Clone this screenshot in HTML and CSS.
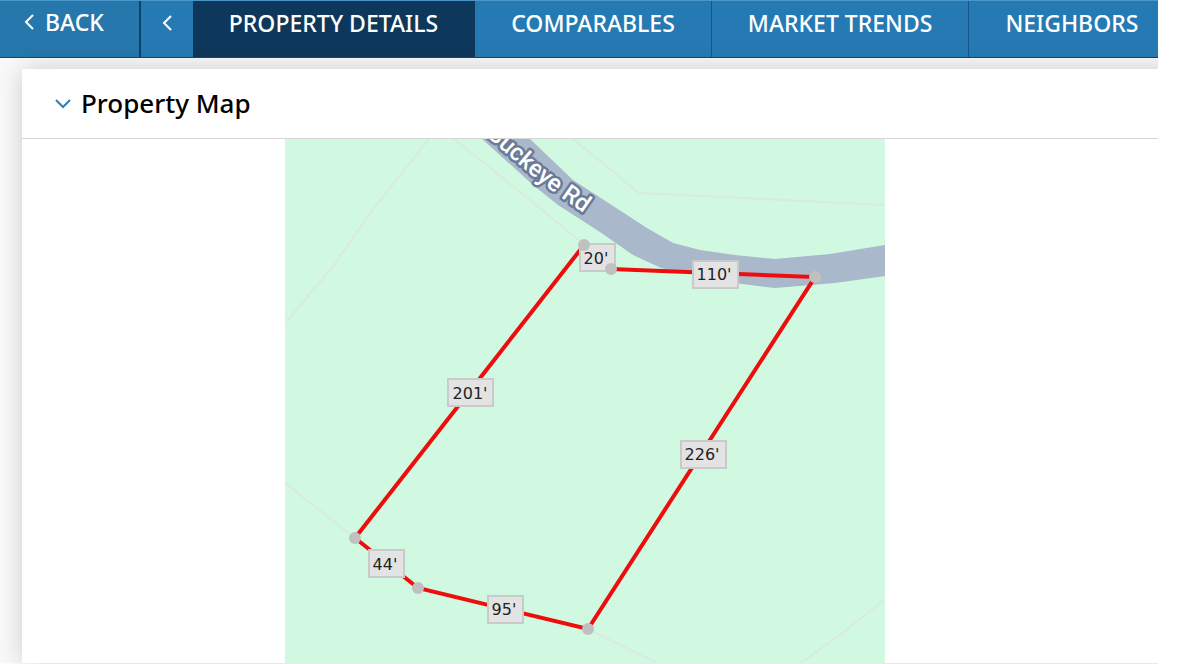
FILE: index.html
```html
<!DOCTYPE html>
<html lang="en">
<head>
    <meta charset="UTF-8">
    <meta name="viewport" content="width=device-width, initial-scale=1.0">
    <title>Property Details</title>
    <link rel="stylesheet" href="styles.css">
</head>
<body>
    <div class="app">
        <nav class="top-bar">
            <button class="back" type="button">
                <svg class="chevron" viewBox="0 0 10 16"><path d="M9 1 L2 8 L9 15"/></svg>
                BACK
            </button>
            <button class="scroll-left" type="button" aria-label="Scroll tabs left">
                <svg class="chevron" viewBox="0 0 10 16"><path d="M9 1 L2 8 L9 15"/></svg>
            </button>
            <a class="tab active" href="#details">PROPERTY DETAILS</a>
            <a class="tab" href="#comparables">COMPARABLES</a>
            <a class="tab" href="#trends">MARKET TRENDS</a>
            <a class="tab" href="#neighbors">NEIGHBORS</a>
        </nav>

        <main class="content">
            <section class="card">
                <h2 class="card-header">
                    <button class="card-toggle" type="button" aria-expanded="true">
                        <svg class="arrow" viewBox="0 0 18 12"><path d="M2 2 L9 9 L16 2"/></svg>
                        Property Map
                    </button>
                </h2>
                <div class="map">
                    <svg class="map-canvas" viewBox="0 0 600 524" preserveAspectRatio="xMidYMin slice">
                        <defs>
                            <path id="road-name" d="M201 -3 L244 34 Q272 57 330 95"/>
                        </defs>

                        <!-- neighbouring lots -->
                        <g class="lots">
                            <path d="M144 0 L82 78 L50 125 L2 182"/>
                            <path d="M169 0 L234 52 L297 104"/>
                            <path d="M288 0 L354 54 L600 66"/>
                            <path d="M0 344 L70 399"/>
                            <path d="M303 490 L372 524"/>
                            <path d="M516 524 L560 492 L600 460"/>
                        </g>

                        <!-- road -->
                        <path class="road" d="M195 -2 L243 -2 L288 41 L362 89 L388 104 L415 111 L450 116 L490 120 L545 115 L600 106 L600 137 L550 144 L490 149 L450 144 L376 129 L348 116 L315 93 L273 66 L248 46 Z"/>
                        <text class="road-label"><textPath href="#road-name">Buckeye Rd</textPath></text>

                        <!-- lot boundary -->
                        <path class="boundary" d="M326 130 L530 138 L303 490 L133 449 L70 399 L299 106"/>

                        <g class="measure">
                            <rect x="295" y="105" width="35" height="27"/>
                            <text x="311" y="125">20'</text>
                            <rect x="408" y="122" width="45" height="27"/>
                            <text x="429" y="141">110'</text>
                            <rect x="163" y="240" width="45" height="27"/>
                            <text x="185" y="260">201'</text>
                            <rect x="396" y="302" width="45" height="27"/>
                            <text x="417" y="321">226'</text>
                            <rect x="84" y="411" width="35" height="27"/>
                            <text x="100" y="431">44'</text>
                            <rect x="203" y="457" width="35" height="27"/>
                            <text x="219" y="476">95'</text>
                        </g>

                        <g class="corners">
                            <circle cx="299" cy="106" r="6"/>
                            <circle cx="326" cy="130" r="6"/>
                            <circle cx="530" cy="138" r="6"/>
                            <circle cx="303" cy="490" r="6"/>
                            <circle cx="133" cy="449" r="6"/>
                            <circle cx="70" cy="399" r="6"/>
                        </g>
                    </svg>
                </div>
            </section>
        </main>
    </div>
</body>
</html>
```

FILE: styles.css
```css
* {
    box-sizing: border-box;
}

body {
    margin: 0;
    background: #fff;
    font-family: "Noto Sans", "Open Sans", sans-serif;
}

.app {
    display: flex;
    flex-direction: column;
    height: 100vh;
    margin-right: 24px;
    padding-bottom: 1px;
    overflow: hidden;
}

.top-bar {
    display: flex;
    flex-shrink: 0;
    height: 58px;
    background: #267ab3;
    border-top: 1px solid #4b96c9;
    border-bottom: 1px solid #15486e;
    overflow: hidden;
}

.top-bar button,
.tab {
    flex-shrink: 0;
    padding: 0 36px 12px;
    border: 0;
    border-right: 1px solid #17568a;
    background: none;
    color: #fff;
    font-family: inherit;
    font-size: 23px;
    font-weight: 500;
    line-height: 44px;
    text-decoration: none;
    white-space: nowrap;
}

.top-bar .back {
    display: flex;
    align-items: center;
    gap: 11px;
    padding: 0 35px 14px 24px;
    background: #2677ab;
    border-right: 2px solid #0f4169;
}

.top-bar .scroll-left {
    display: flex;
    align-items: center;
    padding: 0 21px 12px;
    border-right: 0;
}

.tab.active {
    background: #0d385b;
    border-color: #0d385b;
}

.chevron {
    width: 10px;
    height: 16px;
    fill: none;
    stroke: #fff;
    stroke-width: 2;
}

.content {
    flex: 1;
    display: flex;
    min-height: 0;
    padding: 11px 0 0 22px;
    background: #f9f9f9;
}

.card {
    flex: 1;
    display: flex;
    flex-direction: column;
    min-width: 0;
    margin-right: -24px;
    background: #fff;
    box-shadow: 0 0 24px rgba(0, 0, 0, 0.18);
}

.card-header {
    flex-shrink: 0;
    margin: 0;
    border-bottom: 1px solid #d6d6d6;
}

.card-toggle {
    display: flex;
    align-items: center;
    gap: 9px;
    width: 100%;
    padding: 16px 32px;
    border: 0;
    background: none;
    color: #000;
    font-family: inherit;
    font-size: 26px;
    font-weight: 500;
    line-height: 37px;
}

.arrow {
    width: 18px;
    height: 12px;
    fill: none;
    stroke: #2b7fb8;
    stroke-width: 2;
}

.map {
    flex: 1;
    display: flex;
    justify-content: center;
    min-height: 0;
    padding-right: 34px;
}

.map-canvas {
    width: 600px;
    height: 100%;
    background: #d1f8e1;
}

.lots {
    fill: none;
    stroke: #d9ebdf;
    stroke-width: 2;
}

.road {
    fill: #a9b8ca;
}

.road-label {
    fill: #fff;
    stroke: #6b7a96;
    stroke-width: 5;
    stroke-linejoin: round;
    paint-order: stroke;
    font-family: Roboto, sans-serif;
    font-size: 24px;
    font-weight: 500;
}

.boundary {
    fill: none;
    stroke: #ee0c0c;
    stroke-width: 4;
}

.measure rect {
    fill: #e3e3e3;
    stroke: #c9cbca;
    stroke-width: 2;
}

.measure text {
    fill: #222;
    font-family: "DejaVu Sans", sans-serif;
    font-size: 16px;
    text-anchor: middle;
}

.corners {
    fill: #c0c0c0;
}
```
